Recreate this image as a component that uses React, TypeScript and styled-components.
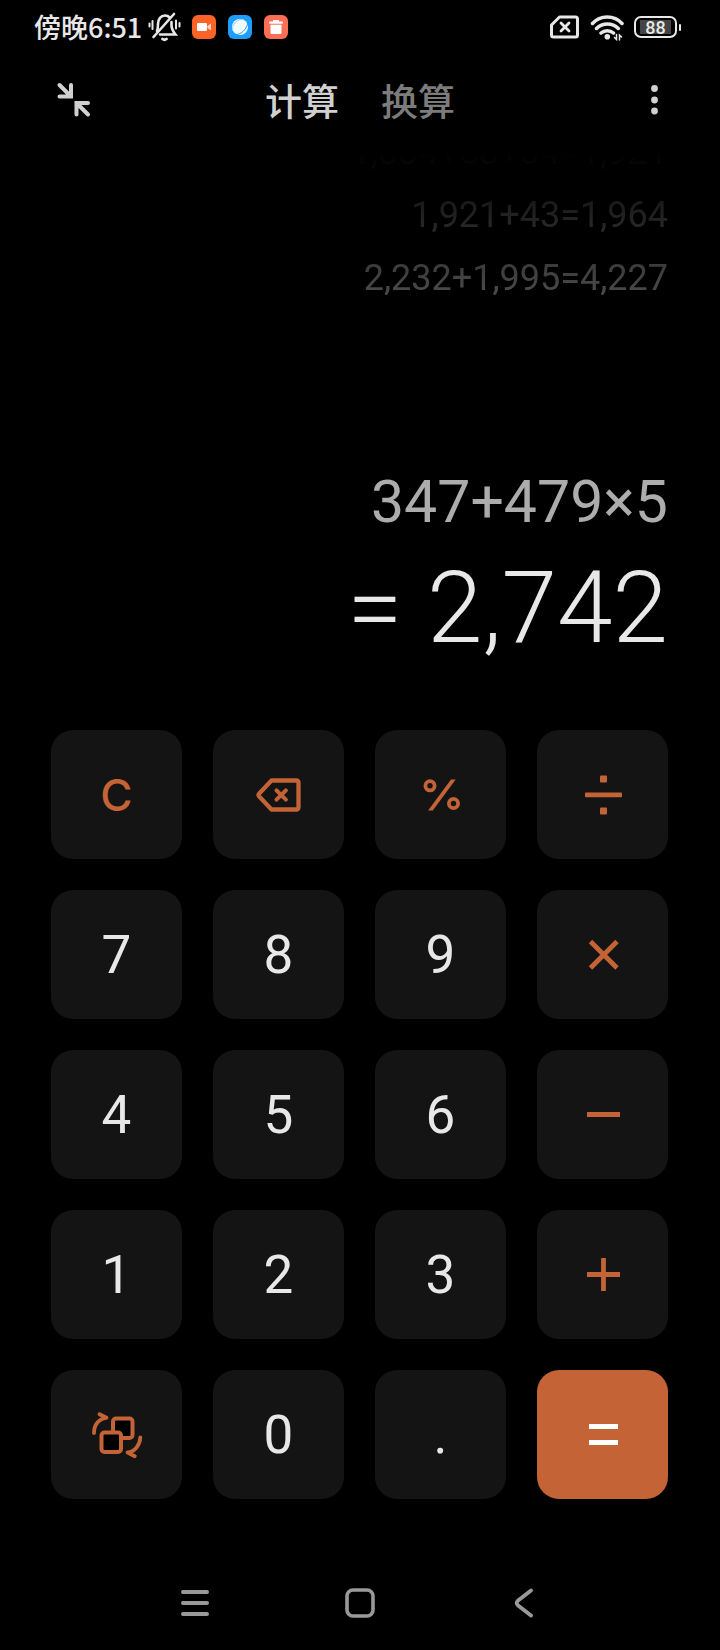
import React from "react";
import styled, { createGlobalStyle, css } from "styled-components";

const ACCENT = "#c46335";
const LIGHT = "#e8e8e8";

const GlobalStyle = createGlobalStyle`
  * { box-sizing: border-box; }
  html, body { margin: 0; background: #000; }
  body { font-family: Roboto, "Noto Sans CJK SC", sans-serif; color: ${LIGHT}; }
  button { margin: 0; padding: 0; border: 0; background: none; color: inherit; font: inherit; cursor: pointer; }
  svg { display: block; flex: none; }
`;

const Screen = styled.div`
  display: flex;
  flex-direction: column;
  min-height: 100vh;
  background: #000;
`;

const StatusBar = styled.div`
  display: flex;
  align-items: center;
  justify-content: space-between;
  height: 54px;
  padding: 0 39px 0 34px;
`;

const StatusGroup = styled.div<{ $gap: number }>`
  display: flex;
  align-items: center;
  gap: ${(p) => p.$gap}px;
`;

const Clock = styled.span`
  font-family: "Noto Sans CJK SC", sans-serif;
  font-size: 27px;
  font-weight: 500;
  line-height: 36px;
  white-space: nowrap;
`;

const Battery = styled.div`
  display: flex;
  align-items: center;
  gap: 2px;
  &::after {
    content: "";
    width: 2px;
    height: 7px;
    border-radius: 1px;
    background: ${LIGHT};
  }
`;

const BatteryShell = styled.div`
  display: flex;
  width: 43px;
  height: 22px;
  padding: 2px 4px;
  border: 2px solid ${LIGHT};
  border-radius: 7px;
`;

const BatteryLevel = styled.span`
  flex: 1;
  background: #444;
  font-size: 18px;
  font-weight: 500;
  line-height: 15px;
  text-align: center;
`;

const Header = styled.header`
  display: grid;
  grid-template-columns: 1fr auto 1fr;
  align-items: center;
  height: 92px;
  padding: 0 56px;
  color: #d0d0d0;
`;

const Tabs = styled.nav`
  display: flex;
  gap: 42px;
`;

const Tab = styled.button<{ $active?: boolean }>`
  color: ${(p) => (p.$active ? "#d0d0d0" : "#7c7c7c")};
  font-family: "Noto Sans CJK SC", sans-serif;
  font-size: 37px;
  font-weight: 500;
  line-height: 54px;
`;

const IconButton = styled.button<{ $end?: boolean }>`
  justify-self: ${(p) => (p.$end ? "end" : "start")};
`;

const Display = styled.main`
  display: flex;
  flex: 1;
  flex-direction: column;
  padding: 0 52px 62px;
  text-align: right;
  white-space: nowrap;
`;

const History = styled.ol`
  display: flex;
  flex-direction: column;
  justify-content: flex-end;
  height: 164px;
  margin: 0 0 auto;
  padding: 0;
  overflow: hidden;
  list-style: none;
  color: #4c4c4c;
  mask-image: linear-gradient(to bottom, transparent 4%, #000 92%);
`;

const HistoryRow = styled.li`
  flex: none;
  font-size: 36px;
  font-weight: 400;
  line-height: 63px;
`;

const Expression = styled.div`
  margin-bottom: 6px;
  color: #acacac;
  font-size: 59px;
  font-weight: 400;
  line-height: 80px;
`;

const Result = styled.output`
  font-size: 100px;
  font-weight: 300;
  line-height: 120px;
`;

const Keypad = styled.section`
  display: grid;
  grid-template-columns: repeat(4, 1fr);
  grid-auto-rows: 129px;
  gap: 31px;
  padding: 0 52px 0 51px;
`;

type Tone = "digit" | "action" | "primary";

const Key = styled.button<{ $tone: Tone }>`
  display: flex;
  align-items: center;
  justify-content: center;
  border-radius: 22px;
  background: #141414;
  color: ${LIGHT};
  font-size: 53px;
  font-weight: 400;
  line-height: 64px;
  ${(p) =>
    p.$tone === "action" &&
    css`
      color: ${ACCENT};
      font-family: Inter, sans-serif;
      font-size: 44px;
      font-weight: 500;
    `}
  ${(p) =>
    p.$tone === "primary" &&
    css`
      background: ${ACCENT};
      color: #fff;
    `}
`;

const NavBar = styled.nav`
  display: grid;
  grid-template-columns: repeat(3, 164px);
  justify-content: center;
  padding: 74px 0 17px;
  color: #999;
`;

const NavButton = styled.button`
  display: flex;
  align-items: center;
  justify-content: center;
  height: 60px;
`;

const MutedBell = () => (
  <svg width="33" height="30" viewBox="0 0 33 30" fill="none" stroke={LIGHT} strokeWidth="2.6" strokeLinecap="round">
    <path d="M9 19c1-2 1-4 1-7 0-5 3-8.500 7-8.500 2 0 3.500.7 4.700 2M23.500 10v3c0 4 1.500 6.500 4 9.500H12" />
    <path d="M26 2 5.500 25" />
    <path d="M14.500 27q2 1.500 4 0" strokeWidth="2.800" />
    <path d="M4.500 9v8M1.500 11.500v3M28 8.500v8M31.500 11v3.500" strokeWidth="2" />
  </svg>
);

const Recorder = () => (
  <svg width="24" height="24" viewBox="0 0 24 24">
    <rect width="24" height="24" rx="6" fill="#fb6426" />
    <rect x="5" y="8" width="10" height="8" rx="1" fill="#fff" />
    <path d="M15.500 11 19 8.500v7L15.500 13z" fill="#ffd8c5" />
  </svg>
);

const Browser = () => (
  <svg width="24" height="24" viewBox="0 0 24 24">
    <rect width="24" height="24" rx="6" fill="#1f9dfb" />
    <circle cx="12" cy="12" r="8" fill="#f1faff" />
    <path d="M7 19.800C13.500 19.500 19 14 19.800 7.500" fill="none" stroke="#1f9dfb" />
    <path d="M4.500 15.500C4 9 9 4 15.500 4.500" fill="none" stroke="#9ad6fb" />
  </svg>
);

const Cleaner = () => (
  <svg width="24" height="24" viewBox="0 0 24 24">
    <rect width="24" height="24" rx="6" fill="#fb6f55" />
    <rect x="9" y="5" width="6" height="2" fill="#fff" />
    <rect x="5" y="6.500" width="14" height="2.200" rx="1" fill="#fff" />
    <path d="M6.500 9.800h11v7.700q0 1.500-1.500 1.500H8q-1.500 0-1.500-1.500z" fill="#fff" />
  </svg>
);

const NoSim = () => (
  <svg width="31" height="24" viewBox="0 0 31 24" fill="none" stroke={LIGHT} strokeLinecap="round" strokeLinejoin="round">
    <path d="M10.500 2H26.500a2 2 0 0 1 2 2V20a2 2 0 0 1-2 2H4.500a2 2 0 0 1-2-2V10z" strokeWidth="3" />
    <path d="m12 8 8 8m0-8-8 8" strokeWidth="2.800" />
  </svg>
);

const Wifi = () => (
  <svg width="34" height="27" viewBox="0 0 34 27" fill="none" stroke={LIGHT} strokeLinecap="round" strokeWidth="3.500">
    <path d="M2.500 9.500A20 20 0 0 1 32 9.500M6.500 14.500A15.500 15.500 0 0 1 28.300 14.500M11 19A9.500 9.500 0 0 1 23.500 19" />
    <circle cx="17.300" cy="22.800" r="2.800" fill={LIGHT} stroke="none" />
    <path d="M26.500 20.500v5l-2-2M29.500 26v-5l2 2" strokeWidth="1.500" />
  </svg>
);

const Collapse = () => (
  <svg width="36" height="36" viewBox="0 0 36 36" fill="none" stroke="currentColor" strokeWidth="4" strokeLinecap="round">
    <path d="M3.500 3 15 14.500M15 3v11.500H3.500M32 32.500 20.500 21M20.500 32.500V21H32" />
  </svg>
);

const Dots = () => (
  <svg width="20" height="32" viewBox="0 0 20 32" fill="currentColor">
    <circle cx="10.500" cy="4.500" r="3.400" />
    <circle cx="10.500" cy="16" r="3.400" />
    <circle cx="10.500" cy="27" r="3.400" />
  </svg>
);

const Backspace = () => (
  <svg width="45" height="34" viewBox="0 0 45 34" fill="none" stroke="currentColor" strokeLinejoin="round" strokeLinecap="round">
    <path d="M15.500 2.500H40.500a2 2 0 0 1 2 2V29.500a2 2 0 0 1-2 2H15.500L3 18.200Q2 17 3 15.800z" strokeWidth="4.300" />
    <path d="m20.500 12.300 9.400 9.400m0-9.400-9.400 9.400" strokeWidth="4" />
  </svg>
);

const Percent = () => (
  <svg width="38" height="34" viewBox="-1 0 38 34" fill="none" stroke="currentColor" strokeWidth="3.800">
    <circle cx="7" cy="7.800" r="4.600" />
    <circle cx="30.500" cy="25.500" r="4.600" />
    <path d="M28 1.500h4.700L9.800 32.500H5.100z" fill="currentColor" stroke="none" />
  </svg>
);

const Divide = () => (
  <svg width="38" height="40" viewBox="0 0 38 40" fill="currentColor">
    <rect x="1" y="17.500" width="37" height="4.800" rx="1" />
    <rect x="16" y="0.500" width="7" height="7" rx="1" />
    <rect x="16" y="32.500" width="7" height="7" rx="1" />
  </svg>
);

const Operator = ({ d }: { d: string }) => (
  <svg width="36" height="36" viewBox="0 0 36 36" fill="none" stroke="currentColor" strokeWidth="4.800">
    <path d={d} />
  </svg>
);

const Convert = () => (
  <svg width="52" height="48" viewBox="0 0 52 48" fill="none" stroke="currentColor" strokeWidth="4" strokeLinecap="round" strokeLinejoin="round">
    <rect x="22" y="7.500" width="19.500" height="19.500" rx="3" fill="#000" />
    <rect x="10.500" y="21.500" width="19.500" height="19.500" rx="3" fill="#000" />
    <path d="M3 22C3 13.500 8 7.500 15.500 6.800L8.500 3.200" strokeWidth="3.800" />
    <path d="M49.300 26.500C49 34 44 40.500 36.500 41.500L43.800 45.200" strokeWidth="3.800" />
  </svg>
);

const MenuIcon = () => (
  <svg width="30" height="30" viewBox="0 0 30 30" stroke="currentColor" strokeWidth="4" strokeLinecap="round">
    <path d="M2 4h24M2 15h24M2 26h24" />
  </svg>
);

const HomeIcon = () => (
  <svg width="30" height="30" viewBox="0 0 30 30" fill="none" stroke="currentColor" strokeWidth="3.600">
    <rect x="2" y="2" width="26" height="26" rx="6" />
  </svg>
);

const BackIcon = () => (
  <svg width="20" height="30" viewBox="0 0 20 30" fill="none" stroke="currentColor" strokeWidth="3.800" strokeLinecap="round">
    <path d="M17 2.500 3.800 12.800Q1.500 15 3.800 17.200L17 27.500" />
  </svg>
);

const history = ["1,834+53+34=1,921", "1,921+43=1,964", "2,232+1,995=4,227"];

const keys: { label: string; tone: Tone; face: React.ReactNode }[] = [
  { label: "清除", tone: "action", face: "C" },
  { label: "退格", tone: "action", face: <Backspace /> },
  { label: "百分号", tone: "action", face: <Percent /> },
  { label: "除", tone: "action", face: <Divide /> },
  { label: "7", tone: "digit", face: "7" },
  { label: "8", tone: "digit", face: "8" },
  { label: "9", tone: "digit", face: "9" },
  { label: "乘", tone: "action", face: <Operator d="M5.500 4.500 32 31M32 4.500 5.500 31" /> },
  { label: "4", tone: "digit", face: "4" },
  { label: "5", tone: "digit", face: "5" },
  { label: "6", tone: "digit", face: "6" },
  { label: "减", tone: "action", face: <Operator d="M2 17.500h33" /> },
  { label: "1", tone: "digit", face: "1" },
  { label: "2", tone: "digit", face: "2" },
  { label: "3", tone: "digit", face: "3" },
  { label: "加", tone: "action", face: <Operator d="M2 17.500h33M18.500 1v33" /> },
  { label: "科学计算", tone: "action", face: <Convert /> },
  { label: "0", tone: "digit", face: "0" },
  { label: "小数点", tone: "digit", face: "." },
  { label: "等于", tone: "primary", face: <Operator d="M4 9.500h29M4 25.500h29" /> },
];

export default function App() {
  return (
    <Screen>
      <GlobalStyle />
      <StatusBar>
        <StatusGroup $gap={11}>
          <StatusGroup $gap={6}>
            <Clock>傍晚6:51</Clock>
            <MutedBell />
          </StatusGroup>
          <StatusGroup $gap={12}>
            <Recorder />
            <Browser />
            <Cleaner />
          </StatusGroup>
        </StatusGroup>
        <StatusGroup $gap={10}>
          <NoSim />
          <Wifi />
          <Battery>
            <BatteryShell>
              <BatteryLevel>88</BatteryLevel>
            </BatteryShell>
          </Battery>
        </StatusGroup>
      </StatusBar>

      <Header>
        <IconButton aria-label="小窗">
          <Collapse />
        </IconButton>
        <Tabs>
          <Tab $active>计算</Tab>
          <Tab>换算</Tab>
        </Tabs>
        <IconButton $end aria-label="更多">
          <Dots />
        </IconButton>
      </Header>

      <Display>
        <History>
          {history.map((line) => (
            <HistoryRow key={line}>{line}</HistoryRow>
          ))}
        </History>
        <Expression>347+479×5</Expression>
        <Result>= 2,742</Result>
      </Display>

      <Keypad>
        {keys.map((k) => (
          <Key key={k.label} $tone={k.tone} aria-label={k.label}>
            {k.face}
          </Key>
        ))}
      </Keypad>

      <NavBar>
        <NavButton aria-label="最近任务">
          <MenuIcon />
        </NavButton>
        <NavButton aria-label="主屏幕">
          <HomeIcon />
        </NavButton>
        <NavButton aria-label="返回">
          <BackIcon />
        </NavButton>
      </NavBar>
    </Screen>
  );
}
